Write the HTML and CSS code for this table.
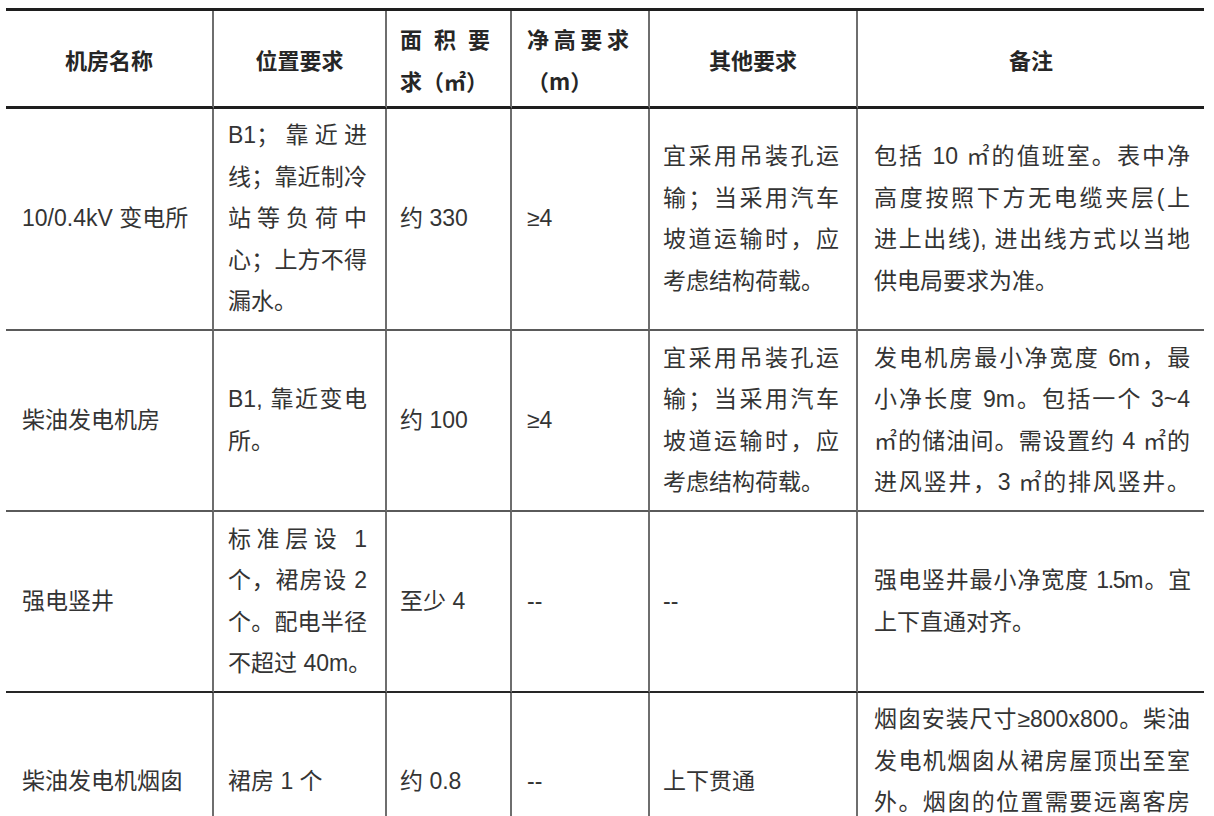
FILE: index.html
```html
<!DOCTYPE html>
<html lang="zh-CN">
<head>
<meta charset="utf-8">
<title>机房要求</title>
<link rel="stylesheet" href="styles.css">
</head>
<body>
<div class="grid">
  <div class="c h c1 ctr">机房名称</div>
  <div class="c h c2 ctr">位置要求</div>
  <div class="c h c3"><div class="wh3"><span class="ln j">面积要</span><span class="ln nw">求（㎡）</span></div></div>
  <div class="c h c4"><div class="wh4"><span class="ln j">净高要求</span><span class="ln nw">（m）</span></div></div>
  <div class="c h c5 ctr">其他要求</div>
  <div class="c h c6 ctr">备注</div>

  <div class="c c1"><span class="nw">10/0.4kV 变电所</span></div>
  <div class="c c2"><div class="w2">
    <span class="ln j">B1；靠近进</span>
    <span class="ln j">线；靠近制冷</span>
    <span class="ln j">站等负荷中</span>
    <span class="ln j">心；上方不得</span>
    <span class="ln nw">漏水。</span>
  </div></div>
  <div class="c c3"><span class="nw">约 330</span></div>
  <div class="c c4"><span class="nw">≥4</span></div>
  <div class="c c5"><div class="w5">
    <span class="ln j">宜采用吊装孔运</span>
    <span class="ln j">输；当采用汽车</span>
    <span class="ln j">坡道运输时，应</span>
    <span class="ln nw">考虑结构荷载。</span>
  </div></div>
  <div class="c c6"><div class="w6">
    <span class="ln j">包括 10 ㎡的值班室。表中净</span>
    <span class="ln j">高度按照下方无电缆夹层(上</span>
    <span class="ln j">进上出线), 进出线方式以当地</span>
    <span class="ln nw">供电局要求为准。</span>
  </div></div>

  <div class="c c1"><span class="nw">柴油发电机房</span></div>
  <div class="c c2"><div class="w2">
    <span class="ln j">B1, 靠近变电</span>
    <span class="ln nw">所。</span>
  </div></div>
  <div class="c c3"><span class="nw">约 100</span></div>
  <div class="c c4"><span class="nw">≥4</span></div>
  <div class="c c5"><div class="w5">
    <span class="ln j">宜采用吊装孔运</span>
    <span class="ln j">输；当采用汽车</span>
    <span class="ln j">坡道运输时，应</span>
    <span class="ln nw">考虑结构荷载。</span>
  </div></div>
  <div class="c c6"><div class="w6">
    <span class="ln j tight">发电机房最小净宽度 6m，最</span>
    <span class="ln j">小净长度 9m。包括一个 3~4</span>
    <span class="ln j">㎡的储油间。需设置约 4 ㎡的</span>
    <span class="ln j">进风竖井，3 ㎡的排风竖井。</span>
  </div></div>

  <div class="c c1 r3"><span class="nw">强电竖井</span></div>
  <div class="c c2 r3"><div class="w2">
    <span class="ln j">标准层设 1</span>
    <span class="ln j">个，裙房设 2</span>
    <span class="ln j">个。配电半径</span>
    <span class="ln nw">不超过 40m。</span>
  </div></div>
  <div class="c c3 r3"><span class="nw">至少 4</span></div>
  <div class="c c4 r3"><span class="nw">--</span></div>
  <div class="c c5 r3"><span class="nw">--</span></div>
  <div class="c c6 r3"><div class="w6">
    <span class="ln j tighter">强电竖井最小净宽度 1.5m。宜</span>
    <span class="ln nw">上下直通对齐。</span>
  </div></div>

  <div class="c c1"><span class="nw">柴油发电机烟囱</span></div>
  <div class="c c2"><span class="nw">裙房 1 个</span></div>
  <div class="c c3"><span class="nw">约 0.8</span></div>
  <div class="c c4"><span class="nw">--</span></div>
  <div class="c c5"><span class="nw">上下贯通</span></div>
  <div class="c c6"><div class="w6">
    <span class="ln j">烟囱安装尺寸≥800x800。柴油</span>
    <span class="ln j">发电机烟囱从裙房屋顶出至室</span>
    <span class="ln j">外。烟囱的位置需要远离客房</span>
    <span class="ln nw">等敏感区域。</span>
  </div></div>
</div>
</body>
</html>
```

FILE: styles.css
```css
html, body {
  margin: 0;
  padding: 0;
  background: #ffffff;
}

.grid {
  margin: 8px 0 0 6px;
  width: 1198px;
  display: grid;
  grid-template-columns: 208px 173px 125px 138px 208px 346px;
  grid-template-rows: 98px 222px 181px 181px 180px;
  border-top: 3px solid #1e1e1e;
}

.c {
  box-sizing: border-box;
  display: flex;
  flex-direction: column;
  justify-content: center;
  align-items: flex-start;
  border-right: 2px solid #6e6e6e;
  border-bottom: 2px solid #5a5a5a;
  font-family: "Liberation Sans", "Noto Sans CJK SC", sans-serif;
  font-size: 23px;
  line-height: 41.5px;
  color: #343434;
  overflow: hidden;
}

.c6 { border-right: none; }

.r3 { border-bottom-color: #262626; }

.h {
  border-bottom: 3px solid #1e1e1e;
  font-family: "Noto Sans CJK SC", "Liberation Sans", sans-serif;
  font-size: 22px;
  line-height: 42px;
  font-weight: 700;
  color: #262626;
}

.ctr { align-items: center; }

.c1 { padding-left: 16px; }
.c2 { padding-left: 14px; }
.c3 { padding-left: 13px; }
.c4 { padding-left: 15px; }
.c5 { padding-left: 13px; }
.c6 { padding-left: 16px; }

.ctr.c1, .ctr.c2, .ctr.c5, .ctr.c6 { padding-left: 0; }

.wh3 { width: 90px; }
.wh4 { width: 102px; }
.w2 { width: 139px; }
.w5 { width: 176px; }
.w6 { width: 316px; }

.ln { display: block; }

.j {
  text-align: justify;
  text-align-last: justify;
}

.nw { white-space: nowrap; }

.tight { letter-spacing: -0.2px; }
.tighter { letter-spacing: -1.3px; }
```
